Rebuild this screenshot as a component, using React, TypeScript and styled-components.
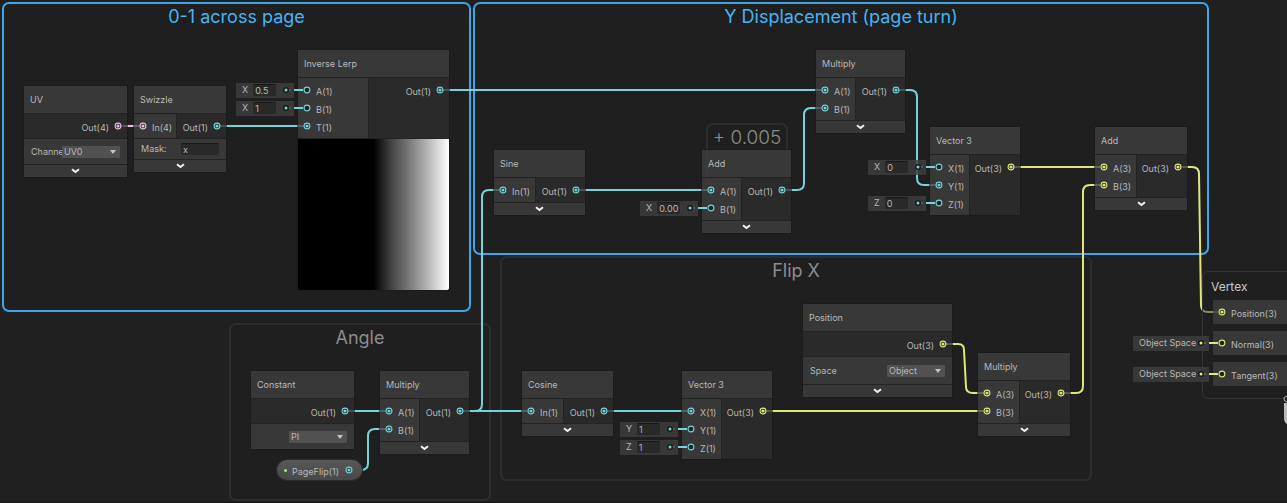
import React from "react";
import styled, { createGlobalStyle, css } from "styled-components";

const TEAL = "#76d3d8";
const LIME = "#e0e67c";
const PINK = "#e8bce4";

const GlobalStyle = createGlobalStyle`
  *, *::before, *::after { box-sizing: border-box; }
  body {
    margin: 0;
    background: #202020;
    color: #b8b8b8;
    font: 400 9px/18px Inter, "Liberation Sans", sans-serif;
  }
  button, input, select { font: inherit; color: inherit; }
`;

const Canvas = styled.main`
  position: relative;
  width: 100%;
  min-height: 100vh;
  overflow: hidden;
  border-bottom: 1px solid #151515;
`;

const Placed = styled.div<{ $x: number; $y: number }>`
  position: absolute;
  left: ${(p) => p.$x}px;
  top: ${(p) => p.$y}px;
`;

const Group = styled(Placed).attrs({ as: "section" })<{
  $w: number;
  $h: number;
  $accent?: boolean;
}>`
  width: ${(p) => p.$w}px;
  height: ${(p) => p.$h}px;
  border: 2px solid ${(p) => (p.$accent ? "#3da6e8" : "#2d2d2d")};
  border-radius: 7px;
  background: #1f1f1f;
  color: ${(p) => (p.$accent ? "#44b4f6" : "#8c8c8c")};
`;

const GroupTitle = styled.h2<{ $large?: boolean }>`
  margin: 0;
  text-align: center;
  font-weight: ${(p) => (p.$large ? 300 : 400)};
  font-size: ${(p) => (p.$large ? 19 : 18)}px;
  line-height: 26px;
`;

const Wires = styled.svg`
  position: absolute;
  inset: 0;
  width: 100%;
  height: 100%;
  fill: none;
  stroke-width: 2;
`;

const NodeCard = styled(Placed).attrs({ as: "article" })<{ $w: number }>`
  width: ${(p) => p.$w}px;
  box-shadow: 0 0 0 1px rgba(25, 25, 25, 0.6);
`;

const NodeHeader = styled.h3`
  margin: 0;
  padding: 0 6px;
  height: 28px;
  border-bottom: 1px solid #232323;
  background: rgba(64, 64, 64, 0.77);
  font-size: 9px;
  font-weight: 400;
  line-height: 27px;
`;

const Ports = styled.div`
  display: flex;
`;

const PortColumn = styled.div<{ $w?: number; $output?: boolean }>`
  padding: 3px 0;
  ${(p) =>
    p.$output
      ? css`
          flex: 1;
          min-width: 0;
          background: rgba(46, 46, 46, 0.77);
        `
      : css`
          width: ${p.$w}px;
          background: rgba(64, 64, 64, 0.77);
          border-right: 1px solid #232323;
        `}
`;

const PortRow = styled.div<{ $output?: boolean }>`
  position: relative;
  display: flex;
  flex-direction: ${(p) => (p.$output ? "row-reverse" : "row")};
  align-items: center;
  gap: 4px;
  height: 18px;
  padding: 0 4px;
  white-space: nowrap;
`;

const PortLabel = styled.span`
  padding-top: 3px;
`;

const PortIcon = styled.svg`
  flex: none;
  width: 10px;
  height: 10px;
  fill: none;
`;

const Literal = styled.div<{ $w: number }>`
  position: absolute;
  right: calc(100% + 4px);
  display: flex;
  align-items: center;
  justify-content: space-between;
  width: ${(p) => p.$w}px;
  height: 15px;
  padding: 0 3px 0 6px;
  background: rgba(62, 62, 62, 0.8);
`;

const LiteralLabel = styled.label`
  display: flex;
  align-items: center;
  gap: 5px;
`;

const ValueBox = styled.input<{ $wide?: boolean }>`
  width: ${(p) => (p.$wide ? 38 : 23)}px;
  height: 12px;
  padding: 0 0 0 2px;
  border: 0;
  border-top: 1px solid #171717;
  border-radius: 2px;
  background: #292929;
  outline: 0;
`;

const Connector = styled.span<{ $color: string }>`
  position: absolute;
  left: 100%;
  width: 9px;
  height: 2px;
  background: ${(p) => p.$color};
`;

const FieldRow = styled.label<{ $h: number }>`
  display: flex;
  align-items: center;
  justify-content: space-between;
  height: ${(p) => p.$h}px;
  padding: 0 7px;
  border-top: 1px solid #232323;
  background: rgba(64, 64, 64, 0.77);
`;

const FieldName = styled.span`
  flex: 1;
  min-width: 0;
  white-space: nowrap;
`;

const SelectWrap = styled.span`
  position: relative;
  display: flex;
  align-items: center;

  svg {
    position: absolute;
    right: 4px;
    width: 6px;
    height: 4px;
    fill: #c4c4c4;
    pointer-events: none;
  }
`;

const Select = styled.select`
  appearance: none;
  width: 58px;
  height: 12px;
  padding: 0 2px;
  border: 0;
  border-radius: 1px;
  background: #515151;
  line-height: 12px;
  outline: 0;
`;

const Collapse = styled.button`
  display: flex;
  align-items: center;
  justify-content: center;
  width: 100%;
  height: 13px;
  padding: 0;
  border: 0;
  border-top: 1px solid #232323;
  background: rgba(64, 64, 64, 0.77);

  svg {
    width: 9px;
    height: 6px;
    fill: none;
    stroke: #f2f2f2;
    stroke-width: 2;
  }
`;

const Preview = styled.div`
  height: 152px;
  border-top: 1px solid #232323;
  border-radius: 0 0 2px 2px;
  background: linear-gradient(90deg, #000 50%, #444 62%, #777 73%, #bbb 87%, #fff 100%);
`;

const Property = styled(Placed)`
  display: flex;
  align-items: center;
  width: 85px;
  height: 20px;
  padding: 0 7px;
  gap: 5px;
  border-radius: 10px;
  background: linear-gradient(#585858, #484848);
  box-shadow: 0 0 0 1px #2c2c2c;
`;

const ExposedDot = styled.i`
  flex: none;
  width: 3px;
  height: 3px;
  border-radius: 50%;
  background: #a2f05e;
`;

const Vertex = styled(Placed).attrs({ as: "section" })`
  right: 0;
  display: flex;
  flex-direction: column;
  gap: 7px;
  height: 128px;
  padding: 3px 0 0 10px;
  border: 1px solid #343434;
  border-right: 0;
  border-radius: 6px 0 0 6px;
  background: rgba(30, 30, 30, 0.45);
`;

const VertexTitle = styled.h2`
  margin: 0 -2px -6px;
  color: #c8c8c8;
  font-size: 12px;
  font-weight: 400;
  line-height: 24px;
`;

const Block = styled.div`
  height: 24px;
  padding: 3px 0;
  background: rgba(64, 64, 64, 0.77);
`;

const Handle = styled.svg`
  position: absolute;
  right: 0;
  top: 396px;
  width: 4px;
  height: 28px;
`;

function Port({ color, linked }: { color: string; linked?: boolean }) {
  return (
    <PortIcon viewBox="0 0 10 10">
      <circle cx="5" cy="5" r="2.9" fill="#1d2424" stroke={color} strokeWidth="1.1" />
      {linked && <circle cx="5" cy="5" r="1.6" fill={color} />}
    </PortIcon>
  );
}

function LiteralDot({ color }: { color: string }) {
  return (
    <PortIcon viewBox="0 0 10 10">
      <path d="M5 5H10" stroke={color} strokeWidth="2" opacity=".25" />
      <circle cx="5" cy="5" r="3" fill="#1b1b1b" />
      <circle cx="5" cy="5" r="1.5" fill={color} />
    </PortIcon>
  );
}

type Input = { name: string; literal?: [string, string] };
type NodeProps = {
  title: string;
  x: number;
  y: number;
  w: number;
  inputs?: Input[];
  inW?: number;
  out: string;
  inColor?: string;
  outColor?: string;
  collapsible?: boolean;
  children?: React.ReactNode;
};

function GraphNode({
  title, x, y, w, inputs, inW = 40, out, inColor = TEAL, outColor = TEAL, collapsible, children,
}: NodeProps) {
  return (
    <NodeCard $x={x} $y={y} $w={w}>
      <NodeHeader>{title}</NodeHeader>
      <Ports>
        {inputs && (
          <PortColumn $w={inW}>
            {inputs.map(({ name, literal }) => (
              <PortRow key={name}>
                {literal && (
                  <Literal $w={58}>
                    <LiteralLabel>
                      {literal[0]}
                      <ValueBox defaultValue={literal[1]} />
                    </LiteralLabel>
                    <LiteralDot color={inColor} />
                    <Connector $color={inColor} />
                  </Literal>
                )}
                <Port color={inColor} linked={!literal} />
                <PortLabel>{name}</PortLabel>
              </PortRow>
            ))}
          </PortColumn>
        )}
        <PortColumn $output>
          <PortRow $output>
            <Port color={outColor} linked />
            <PortLabel>{out}</PortLabel>
          </PortRow>
        </PortColumn>
      </Ports>
      {children}
      {collapsible && (
        <Collapse aria-label={`Collapse ${title}`}>
          <svg viewBox="0 0 9 6"><path d="M1 1.2 4.5 4 8 1.2" /></svg>
        </Collapse>
      )}
    </NodeCard>
  );
}

function Dropdown({ value, label }: { value: string; label?: string }) {
  return (
    <SelectWrap>
      <Select defaultValue={value} aria-label={label}>
        <option>{value}</option>
      </Select>
      <svg viewBox="0 0 6 4"><path d="M0 0H6L3 4Z" /></svg>
    </SelectWrap>
  );
}

export default function App() {
  return (
    <Canvas>
      <GlobalStyle />
      <Group $x={2} $y={2} $w={469} $h={310} $accent><GroupTitle>0-1 across page</GroupTitle></Group>
      <Group $x={229} $y={323} $w={262} $h={178}><GroupTitle>Angle</GroupTitle></Group>
      <Group $x={500} $y={256} $w={592} $h={225}><GroupTitle>Flip X</GroupTitle></Group>
      <Group $x={473} $y={2} $w={736} $h={253} $accent><GroupTitle>Y Displacement (page turn)</GroupTitle></Group>
      <Group $x={706} $y={123} $w={82} $h={62}><GroupTitle $large>+ 0.005</GroupTitle></Group>

      <Wires>
        <path stroke={PINK} d="M119 126H143" />
        <g stroke={TEAL}>
          <path d="M217 126H307" />
          <path d="M440 90H825" />
          <path d="M576 190H711" />
          <path d="M782 190H797Q804 190 804 183V115Q804 108 811 108H825" />
          <path d="M896 90H910Q917 90 917 97V178Q917 185 924 185H939" />
          <path d="M345 411H389" />
          <path d="M347 470H361Q368 470 368 463V436Q368 429 375 429H389" />
          <path d="M460 411H531" />
          <path d="M460 411H475Q482 411 482 404V197Q482 190 489 190H503" />
          <path d="M604 411H691" />
        </g>
        <g stroke={LIME}>
          <path d="M1011 167H1104" />
          <path d="M763 411H987" />
          <path d="M943 344H958Q964 344 964 350L966 387Q966 393 973 393H987" />
          <path d="M1061 393H1076Q1083 393 1083 386V192Q1083 185 1090 185H1104" />
          <path d="M1178 167H1192Q1199 167 1199 174L1201 305Q1201 312 1208 312H1222" />
        </g>
      </Wires>

      <GraphNode title="UV" x={24} y={86} w={103} out="Out(4)" outColor={PINK} collapsible>
        <FieldRow $h={26}>
          <FieldName>Channe</FieldName>
          <Dropdown value="UV0" />
        </FieldRow>
      </GraphNode>
      <GraphNode title="Swizzle" x={134} y={86} w={92} inputs={[{ name: "In(4)" }]} inW={43} out="Out(1)" inColor={PINK} collapsible>
        <FieldRow $h={21}>
          <FieldName>Mask:</FieldName>
          <ValueBox $wide defaultValue="x" />
        </FieldRow>
      </GraphNode>
      <GraphNode
        title="Inverse Lerp" x={298} y={50} w={151} inW={71} out="Out(1)"
        inputs={[{ name: "A(1)", literal: ["X", "0.5"] }, { name: "B(1)", literal: ["X", "1"] }, { name: "T(1)" }]}
      >
        <Preview />
      </GraphNode>
      <GraphNode title="Sine" x={494} y={150} w={91} inW={42} inputs={[{ name: "In(1)" }]} out="Out(1)" collapsible />
      <GraphNode
        title="Add" x={702} y={150} w={89} out="Out(1)" collapsible
        inputs={[{ name: "A(1)" }, { name: "B(1)", literal: ["X", "0.00"] }]}
      />
      <GraphNode title="Multiply" x={816} y={50} w={89} inputs={[{ name: "A(1)" }, { name: "B(1)" }]} out="Out(1)" collapsible />
      <GraphNode
        title="Vector 3" x={930} y={127} w={90} out="Out(3)" outColor={LIME}
        inputs={[{ name: "X(1)", literal: ["X", "0"] }, { name: "Y(1)" }, { name: "Z(1)", literal: ["Z", "0"] }]}
      />
      <GraphNode
        title="Add" x={1095} y={127} w={92} inW={42} out="Out(3)" inColor={LIME} outColor={LIME} collapsible
        inputs={[{ name: "A(3)" }, { name: "B(3)" }]}
      />
      <GraphNode title="Constant" x={251} y={371} w={103} out="Out(1)">
        <FieldRow as="div" $h={26}>
          <FieldName />
          <Dropdown value="PI" label="Constant" />
        </FieldRow>
      </GraphNode>
      <GraphNode title="Multiply" x={380} y={371} w={89} inputs={[{ name: "A(1)" }, { name: "B(1)" }]} out="Out(1)" collapsible />
      <GraphNode title="Cosine" x={522} y={371} w={91} inW={42} inputs={[{ name: "In(1)" }]} out="Out(1)" collapsible />
      <GraphNode
        title="Vector 3" x={682} y={371} w={90} out="Out(3)" outColor={LIME}
        inputs={[{ name: "X(1)" }, { name: "Y(1)", literal: ["Y", "1"] }, { name: "Z(1)", literal: ["Z", "1"] }]}
      />
      <GraphNode title="Position" x={803} y={304} w={149} out="Out(3)" outColor={LIME} collapsible>
        <FieldRow $h={28}>
          <FieldName>Space</FieldName>
          <Dropdown value="Object" />
        </FieldRow>
      </GraphNode>
      <GraphNode
        title="Multiply" x={978} y={353} w={92} inW={42} out="Out(3)" inColor={LIME} outColor={LIME} collapsible
        inputs={[{ name: "A(3)" }, { name: "B(3)" }]}
      />
      <Property $x={277} $y={460}>
        <ExposedDot />
        <PortLabel>PageFlip(1)</PortLabel>
        <Port color={TEAL} linked />
      </Property>

      <Vertex $x={1202} $y={271}>
        <VertexTitle>Vertex</VertexTitle>
        {["Position(3)", "Normal(3)", "Tangent(3)"].map((name, i) => (
          <Block key={name}>
            <PortRow>
              {i > 0 && (
                <Literal $w={76}>
                  <span>Object Space</span>
                  <LiteralDot color={LIME} />
                  <Connector $color={LIME} />
                </Literal>
              )}
              <Port color={LIME} linked={i === 0} />
              <PortLabel>{name}</PortLabel>
            </PortRow>
          </Block>
        ))}
      </Vertex>
      <Handle viewBox="0 0 4 28">
        <circle cx="3.5" cy="3" r="2.5" fill="#202020" stroke="#bbb" />
        <path d="M1 7H4V28Q1 26 1 22Z" fill="#bbb" />
      </Handle>
    </Canvas>
  );
}
